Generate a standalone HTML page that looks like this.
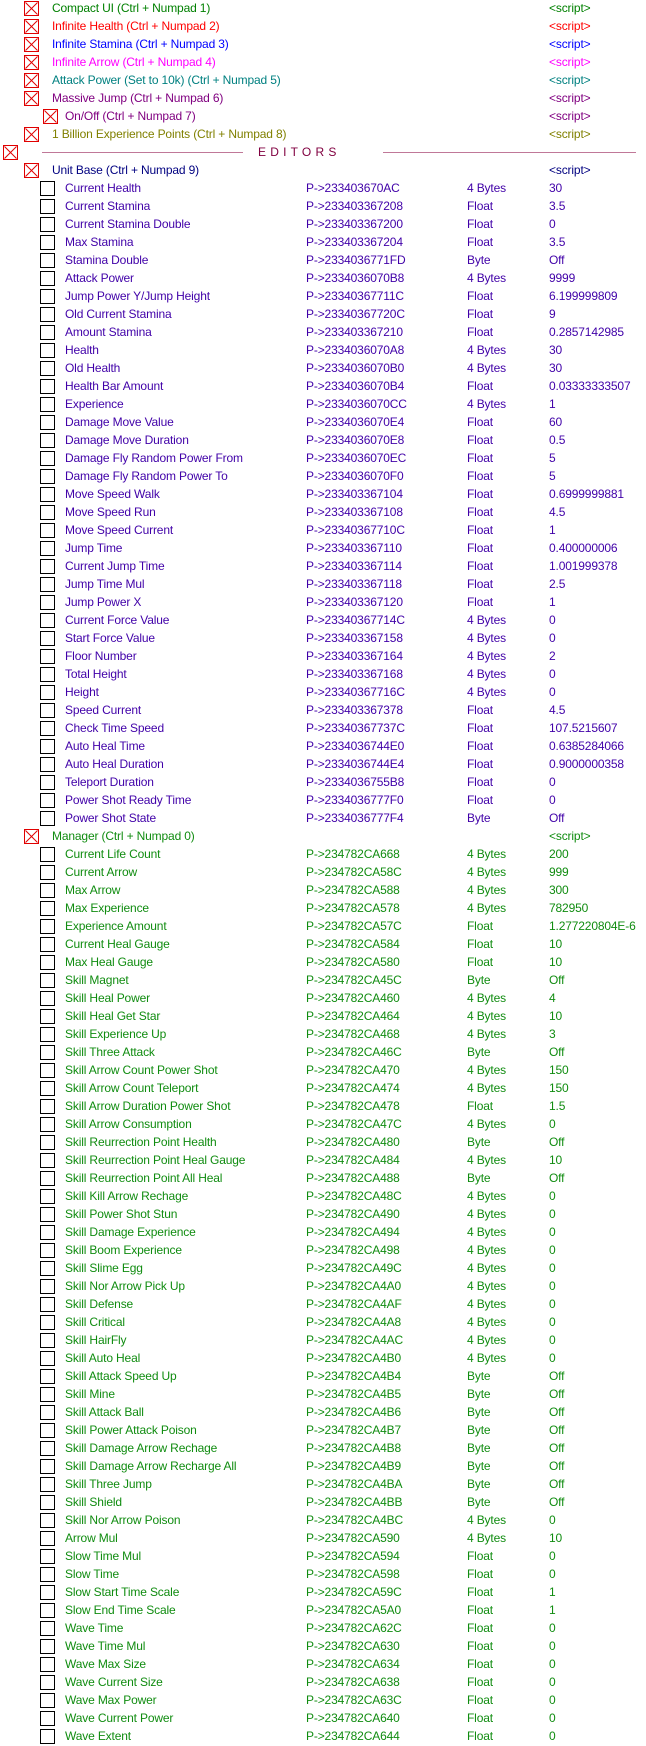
<!DOCTYPE html>
<html><head><meta charset="utf-8"><style>
html,body{margin:0;padding:0;background:#fff;width:646px;height:1746px;overflow:hidden}
body{font-family:"Liberation Sans",Arial,sans-serif;font-size:12px;letter-spacing:-0.15px;position:relative}
#w{position:absolute;top:-1px;left:0;width:646px}
.r{position:relative;height:18px;line-height:18px;white-space:nowrap}
.r span{position:absolute;top:0}
.b{position:absolute;top:2px;width:13px;height:13px;border:1px solid #000;background:#fff}
.x{border-color:#e00000}
.x::before,.x::after{content:"";position:absolute;left:-2px;top:6px;width:17px;height:1px;background:#e00000;transform:rotate(45deg)}
.x::after{transform:rotate(-45deg)}
.t1 .b{left:24px}.t1 .n{left:52px}
.t2 .b{left:40px}.t2 .n{left:65px}
.c .b{left:40px}.c .n{left:65px}
.a{left:306px}.t{left:467px}.v{left:549px}
.u{color:#4000a8}.m{color:#108c10}
</style></head><body><div id="w">
<div class="r t1" style="color:#008000"><i class="b x"></i><span class="n">Compact UI (Ctrl + Numpad 1)</span><span class="v">&lt;script&gt;</span></div>
<div class="r t1" style="color:#ff0000"><i class="b x"></i><span class="n">Infinite Health (Ctrl + Numpad 2)</span><span class="v">&lt;script&gt;</span></div>
<div class="r t1" style="color:#0000ff"><i class="b x"></i><span class="n">Infinite Stamina (Ctrl + Numpad 3)</span><span class="v">&lt;script&gt;</span></div>
<div class="r t1" style="color:#ff00ff"><i class="b x"></i><span class="n">Infinite Arrow (Ctrl + Numpad 4)</span><span class="v">&lt;script&gt;</span></div>
<div class="r t1" style="color:#008080"><i class="b x"></i><span class="n">Attack Power (Set to 10k) (Ctrl + Numpad 5)</span><span class="v">&lt;script&gt;</span></div>
<div class="r t1" style="color:#800080"><i class="b x"></i><span class="n">Massive Jump (Ctrl + Numpad 6)</span><span class="v">&lt;script&gt;</span></div>
<div class="r t2" style="color:#800080"><i class="b x" style="left:43px"></i><span class="n">On/Off (Ctrl + Numpad 7)</span><span class="v">&lt;script&gt;</span></div>
<div class="r t1" style="color:#808000"><i class="b x"></i><span class="n">1 Billion Experience Points (Ctrl + Numpad 8)</span><span class="v">&lt;script&gt;</span></div>
<div class="r" style="color:#800040"><i class="b x" style="left:3px"></i><div style="position:absolute;left:42px;top:9px;width:201px;height:1px;background:#c07898"></div><span style="left:258px;letter-spacing:4.2px">EDITORS</span><div style="position:absolute;left:383px;top:9px;width:253px;height:1px;background:#c07898"></div></div>
<div class="r t1" style="color:#000080"><i class="b x"></i><span class="n">Unit Base (Ctrl + Numpad 9)</span><span class="v">&lt;script&gt;</span></div>
<div class="r c u"><i class="b"></i><span class="n">Current Health</span><span class="a">P-&gt;233403670AC</span><span class="t">4 Bytes</span><span class="v">30</span></div>
<div class="r c u"><i class="b"></i><span class="n">Current Stamina</span><span class="a">P-&gt;233403367208</span><span class="t">Float</span><span class="v">3.5</span></div>
<div class="r c u"><i class="b"></i><span class="n">Current Stamina Double</span><span class="a">P-&gt;233403367200</span><span class="t">Float</span><span class="v">0</span></div>
<div class="r c u"><i class="b"></i><span class="n">Max Stamina</span><span class="a">P-&gt;233403367204</span><span class="t">Float</span><span class="v">3.5</span></div>
<div class="r c u"><i class="b"></i><span class="n">Stamina Double</span><span class="a">P-&gt;2334036771FD</span><span class="t">Byte</span><span class="v">Off</span></div>
<div class="r c u"><i class="b"></i><span class="n">Attack Power</span><span class="a">P-&gt;2334036070B8</span><span class="t">4 Bytes</span><span class="v">9999</span></div>
<div class="r c u"><i class="b"></i><span class="n">Jump Power Y/Jump Height</span><span class="a">P-&gt;23340367711C</span><span class="t">Float</span><span class="v">6.199999809</span></div>
<div class="r c u"><i class="b"></i><span class="n">Old Current Stamina</span><span class="a">P-&gt;23340367720C</span><span class="t">Float</span><span class="v">9</span></div>
<div class="r c u"><i class="b"></i><span class="n">Amount Stamina</span><span class="a">P-&gt;233403367210</span><span class="t">Float</span><span class="v">0.2857142985</span></div>
<div class="r c u"><i class="b"></i><span class="n">Health</span><span class="a">P-&gt;2334036070A8</span><span class="t">4 Bytes</span><span class="v">30</span></div>
<div class="r c u"><i class="b"></i><span class="n">Old Health</span><span class="a">P-&gt;2334036070B0</span><span class="t">4 Bytes</span><span class="v">30</span></div>
<div class="r c u"><i class="b"></i><span class="n">Health Bar Amount</span><span class="a">P-&gt;2334036070B4</span><span class="t">Float</span><span class="v">0.03333333507</span></div>
<div class="r c u"><i class="b"></i><span class="n">Experience</span><span class="a">P-&gt;2334036070CC</span><span class="t">4 Bytes</span><span class="v">1</span></div>
<div class="r c u"><i class="b"></i><span class="n">Damage Move Value</span><span class="a">P-&gt;2334036070E4</span><span class="t">Float</span><span class="v">60</span></div>
<div class="r c u"><i class="b"></i><span class="n">Damage Move Duration</span><span class="a">P-&gt;2334036070E8</span><span class="t">Float</span><span class="v">0.5</span></div>
<div class="r c u"><i class="b"></i><span class="n">Damage Fly Random Power From</span><span class="a">P-&gt;2334036070EC</span><span class="t">Float</span><span class="v">5</span></div>
<div class="r c u"><i class="b"></i><span class="n">Damage Fly Random Power To</span><span class="a">P-&gt;2334036070F0</span><span class="t">Float</span><span class="v">5</span></div>
<div class="r c u"><i class="b"></i><span class="n">Move Speed Walk</span><span class="a">P-&gt;233403367104</span><span class="t">Float</span><span class="v">0.6999999881</span></div>
<div class="r c u"><i class="b"></i><span class="n">Move Speed Run</span><span class="a">P-&gt;233403367108</span><span class="t">Float</span><span class="v">4.5</span></div>
<div class="r c u"><i class="b"></i><span class="n">Move Speed Current</span><span class="a">P-&gt;23340367710C</span><span class="t">Float</span><span class="v">1</span></div>
<div class="r c u"><i class="b"></i><span class="n">Jump Time</span><span class="a">P-&gt;233403367110</span><span class="t">Float</span><span class="v">0.400000006</span></div>
<div class="r c u"><i class="b"></i><span class="n">Current Jump Time</span><span class="a">P-&gt;233403367114</span><span class="t">Float</span><span class="v">1.001999378</span></div>
<div class="r c u"><i class="b"></i><span class="n">Jump Time Mul</span><span class="a">P-&gt;233403367118</span><span class="t">Float</span><span class="v">2.5</span></div>
<div class="r c u"><i class="b"></i><span class="n">Jump Power X</span><span class="a">P-&gt;233403367120</span><span class="t">Float</span><span class="v">1</span></div>
<div class="r c u"><i class="b"></i><span class="n">Current Force Value</span><span class="a">P-&gt;23340367714C</span><span class="t">4 Bytes</span><span class="v">0</span></div>
<div class="r c u"><i class="b"></i><span class="n">Start Force Value</span><span class="a">P-&gt;233403367158</span><span class="t">4 Bytes</span><span class="v">0</span></div>
<div class="r c u"><i class="b"></i><span class="n">Floor Number</span><span class="a">P-&gt;233403367164</span><span class="t">4 Bytes</span><span class="v">2</span></div>
<div class="r c u"><i class="b"></i><span class="n">Total Height</span><span class="a">P-&gt;233403367168</span><span class="t">4 Bytes</span><span class="v">0</span></div>
<div class="r c u"><i class="b"></i><span class="n">Height</span><span class="a">P-&gt;23340367716C</span><span class="t">4 Bytes</span><span class="v">0</span></div>
<div class="r c u"><i class="b"></i><span class="n">Speed Current</span><span class="a">P-&gt;233403367378</span><span class="t">Float</span><span class="v">4.5</span></div>
<div class="r c u"><i class="b"></i><span class="n">Check Time Speed</span><span class="a">P-&gt;23340367737C</span><span class="t">Float</span><span class="v">107.5215607</span></div>
<div class="r c u"><i class="b"></i><span class="n">Auto Heal Time</span><span class="a">P-&gt;2334036744E0</span><span class="t">Float</span><span class="v">0.6385284066</span></div>
<div class="r c u"><i class="b"></i><span class="n">Auto Heal Duration</span><span class="a">P-&gt;2334036744E4</span><span class="t">Float</span><span class="v">0.9000000358</span></div>
<div class="r c u"><i class="b"></i><span class="n">Teleport Duration</span><span class="a">P-&gt;2334036755B8</span><span class="t">Float</span><span class="v">0</span></div>
<div class="r c u"><i class="b"></i><span class="n">Power Shot Ready Time</span><span class="a">P-&gt;2334036777F0</span><span class="t">Float</span><span class="v">0</span></div>
<div class="r c u"><i class="b"></i><span class="n">Power Shot State</span><span class="a">P-&gt;2334036777F4</span><span class="t">Byte</span><span class="v">Off</span></div>
<div class="r t1 m"><i class="b x"></i><span class="n">Manager (Ctrl + Numpad 0)</span><span class="v">&lt;script&gt;</span></div>
<div class="r c m"><i class="b"></i><span class="n">Current Life Count</span><span class="a">P-&gt;234782CA668</span><span class="t">4 Bytes</span><span class="v">200</span></div>
<div class="r c m"><i class="b"></i><span class="n">Current Arrow</span><span class="a">P-&gt;234782CA58C</span><span class="t">4 Bytes</span><span class="v">999</span></div>
<div class="r c m"><i class="b"></i><span class="n">Max Arrow</span><span class="a">P-&gt;234782CA588</span><span class="t">4 Bytes</span><span class="v">300</span></div>
<div class="r c m"><i class="b"></i><span class="n">Max Experience</span><span class="a">P-&gt;234782CA578</span><span class="t">4 Bytes</span><span class="v">782950</span></div>
<div class="r c m"><i class="b"></i><span class="n">Experience Amount</span><span class="a">P-&gt;234782CA57C</span><span class="t">Float</span><span class="v">1.277220804E-6</span></div>
<div class="r c m"><i class="b"></i><span class="n">Current Heal Gauge</span><span class="a">P-&gt;234782CA584</span><span class="t">Float</span><span class="v">10</span></div>
<div class="r c m"><i class="b"></i><span class="n">Max Heal Gauge</span><span class="a">P-&gt;234782CA580</span><span class="t">Float</span><span class="v">10</span></div>
<div class="r c m"><i class="b"></i><span class="n">Skill Magnet</span><span class="a">P-&gt;234782CA45C</span><span class="t">Byte</span><span class="v">Off</span></div>
<div class="r c m"><i class="b"></i><span class="n">Skill Heal Power</span><span class="a">P-&gt;234782CA460</span><span class="t">4 Bytes</span><span class="v">4</span></div>
<div class="r c m"><i class="b"></i><span class="n">Skill Heal Get Star</span><span class="a">P-&gt;234782CA464</span><span class="t">4 Bytes</span><span class="v">10</span></div>
<div class="r c m"><i class="b"></i><span class="n">Skill Experience Up</span><span class="a">P-&gt;234782CA468</span><span class="t">4 Bytes</span><span class="v">3</span></div>
<div class="r c m"><i class="b"></i><span class="n">Skill Three Attack</span><span class="a">P-&gt;234782CA46C</span><span class="t">Byte</span><span class="v">Off</span></div>
<div class="r c m"><i class="b"></i><span class="n">Skill Arrow Count Power Shot</span><span class="a">P-&gt;234782CA470</span><span class="t">4 Bytes</span><span class="v">150</span></div>
<div class="r c m"><i class="b"></i><span class="n">Skill Arrow Count Teleport</span><span class="a">P-&gt;234782CA474</span><span class="t">4 Bytes</span><span class="v">150</span></div>
<div class="r c m"><i class="b"></i><span class="n">Skill Arrow Duration Power Shot</span><span class="a">P-&gt;234782CA478</span><span class="t">Float</span><span class="v">1.5</span></div>
<div class="r c m"><i class="b"></i><span class="n">Skill Arrow Consumption</span><span class="a">P-&gt;234782CA47C</span><span class="t">4 Bytes</span><span class="v">0</span></div>
<div class="r c m"><i class="b"></i><span class="n">Skill Reurrection Point Health</span><span class="a">P-&gt;234782CA480</span><span class="t">Byte</span><span class="v">Off</span></div>
<div class="r c m"><i class="b"></i><span class="n">Skill Reurrection Point Heal Gauge</span><span class="a">P-&gt;234782CA484</span><span class="t">4 Bytes</span><span class="v">10</span></div>
<div class="r c m"><i class="b"></i><span class="n">Skill Reurrection Point All Heal</span><span class="a">P-&gt;234782CA488</span><span class="t">Byte</span><span class="v">Off</span></div>
<div class="r c m"><i class="b"></i><span class="n">Skill Kill Arrow Rechage</span><span class="a">P-&gt;234782CA48C</span><span class="t">4 Bytes</span><span class="v">0</span></div>
<div class="r c m"><i class="b"></i><span class="n">Skill Power Shot Stun</span><span class="a">P-&gt;234782CA490</span><span class="t">4 Bytes</span><span class="v">0</span></div>
<div class="r c m"><i class="b"></i><span class="n">Skill Damage Experience</span><span class="a">P-&gt;234782CA494</span><span class="t">4 Bytes</span><span class="v">0</span></div>
<div class="r c m"><i class="b"></i><span class="n">Skill Boom Experience</span><span class="a">P-&gt;234782CA498</span><span class="t">4 Bytes</span><span class="v">0</span></div>
<div class="r c m"><i class="b"></i><span class="n">Skill Slime Egg</span><span class="a">P-&gt;234782CA49C</span><span class="t">4 Bytes</span><span class="v">0</span></div>
<div class="r c m"><i class="b"></i><span class="n">Skill Nor Arrow Pick Up</span><span class="a">P-&gt;234782CA4A0</span><span class="t">4 Bytes</span><span class="v">0</span></div>
<div class="r c m"><i class="b"></i><span class="n">Skill Defense</span><span class="a">P-&gt;234782CA4AF</span><span class="t">4 Bytes</span><span class="v">0</span></div>
<div class="r c m"><i class="b"></i><span class="n">Skill Critical</span><span class="a">P-&gt;234782CA4A8</span><span class="t">4 Bytes</span><span class="v">0</span></div>
<div class="r c m"><i class="b"></i><span class="n">Skill HairFly</span><span class="a">P-&gt;234782CA4AC</span><span class="t">4 Bytes</span><span class="v">0</span></div>
<div class="r c m"><i class="b"></i><span class="n">Skill Auto Heal</span><span class="a">P-&gt;234782CA4B0</span><span class="t">4 Bytes</span><span class="v">0</span></div>
<div class="r c m"><i class="b"></i><span class="n">Skill Attack Speed Up</span><span class="a">P-&gt;234782CA4B4</span><span class="t">Byte</span><span class="v">Off</span></div>
<div class="r c m"><i class="b"></i><span class="n">Skill Mine</span><span class="a">P-&gt;234782CA4B5</span><span class="t">Byte</span><span class="v">Off</span></div>
<div class="r c m"><i class="b"></i><span class="n">Skill Attack Ball</span><span class="a">P-&gt;234782CA4B6</span><span class="t">Byte</span><span class="v">Off</span></div>
<div class="r c m"><i class="b"></i><span class="n">Skill Power Attack Poison</span><span class="a">P-&gt;234782CA4B7</span><span class="t">Byte</span><span class="v">Off</span></div>
<div class="r c m"><i class="b"></i><span class="n">Skill Damage Arrow Rechage</span><span class="a">P-&gt;234782CA4B8</span><span class="t">Byte</span><span class="v">Off</span></div>
<div class="r c m"><i class="b"></i><span class="n">Skill Damage Arrow Recharge All</span><span class="a">P-&gt;234782CA4B9</span><span class="t">Byte</span><span class="v">Off</span></div>
<div class="r c m"><i class="b"></i><span class="n">Skill Three Jump</span><span class="a">P-&gt;234782CA4BA</span><span class="t">Byte</span><span class="v">Off</span></div>
<div class="r c m"><i class="b"></i><span class="n">Skill Shield</span><span class="a">P-&gt;234782CA4BB</span><span class="t">Byte</span><span class="v">Off</span></div>
<div class="r c m"><i class="b"></i><span class="n">Skill Nor Arrow Poison</span><span class="a">P-&gt;234782CA4BC</span><span class="t">4 Bytes</span><span class="v">0</span></div>
<div class="r c m"><i class="b"></i><span class="n">Arrow Mul</span><span class="a">P-&gt;234782CA590</span><span class="t">4 Bytes</span><span class="v">10</span></div>
<div class="r c m"><i class="b"></i><span class="n">Slow Time Mul</span><span class="a">P-&gt;234782CA594</span><span class="t">Float</span><span class="v">0</span></div>
<div class="r c m"><i class="b"></i><span class="n">Slow Time</span><span class="a">P-&gt;234782CA598</span><span class="t">Float</span><span class="v">0</span></div>
<div class="r c m"><i class="b"></i><span class="n">Slow Start Time Scale</span><span class="a">P-&gt;234782CA59C</span><span class="t">Float</span><span class="v">1</span></div>
<div class="r c m"><i class="b"></i><span class="n">Slow End Time Scale</span><span class="a">P-&gt;234782CA5A0</span><span class="t">Float</span><span class="v">1</span></div>
<div class="r c m"><i class="b"></i><span class="n">Wave Time</span><span class="a">P-&gt;234782CA62C</span><span class="t">Float</span><span class="v">0</span></div>
<div class="r c m"><i class="b"></i><span class="n">Wave Time Mul</span><span class="a">P-&gt;234782CA630</span><span class="t">Float</span><span class="v">0</span></div>
<div class="r c m"><i class="b"></i><span class="n">Wave Max Size</span><span class="a">P-&gt;234782CA634</span><span class="t">Float</span><span class="v">0</span></div>
<div class="r c m"><i class="b"></i><span class="n">Wave Current Size</span><span class="a">P-&gt;234782CA638</span><span class="t">Float</span><span class="v">0</span></div>
<div class="r c m"><i class="b"></i><span class="n">Wave Max Power</span><span class="a">P-&gt;234782CA63C</span><span class="t">Float</span><span class="v">0</span></div>
<div class="r c m"><i class="b"></i><span class="n">Wave Current Power</span><span class="a">P-&gt;234782CA640</span><span class="t">Float</span><span class="v">0</span></div>
<div class="r c m"><i class="b"></i><span class="n">Wave Extent</span><span class="a">P-&gt;234782CA644</span><span class="t">Float</span><span class="v">0</span></div>
</div></body></html>
